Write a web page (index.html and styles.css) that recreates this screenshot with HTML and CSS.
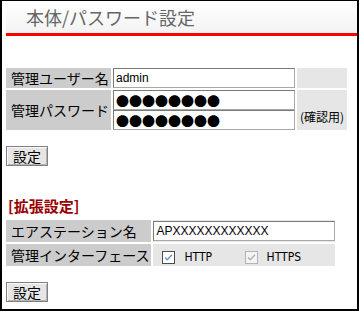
FILE: index.html
```html
<!DOCTYPE html>
<html>
<head>
<meta charset="utf-8">
<title>本体/パスワード設定</title>
<link rel="stylesheet" href="styles.css">
</head>
<body>
<h1 class="titleBar">本体/パスワード設定</h1>

<table class="formTable basicTable">
  <tr>
    <th>管理ユーザー名</th>
    <td class="field"><input type="text" value="admin"></td>
    <td class="note"></td>
  </tr>
  <tr>
    <th>管理パスワード</th>
    <td class="field">
      <input type="text" class="pw" value="●●●●●●●●">
      <input type="text" class="pw" value="●●●●●●●●">
    </td>
    <td class="note">(確認用)</td>
  </tr>
</table>
<button class="btn">設定</button>

<h2 class="sectionTitle">[拡張設定]</h2>

<table class="formTable extTable">
  <tr>
    <th>エアステーション名</th>
    <td class="field"><input type="text" class="apName" value="APXXXXXXXXXXXX"></td>
  </tr>
  <tr>
    <th>管理インターフェース</th>
    <td class="checks">
      <span class="opt">
        <svg width="13" height="13" viewBox="0 0 13 13"><rect x="0.5" y="0.5" width="12" height="12" fill="#fff" stroke="#4d4d4d"/><path d="M3 6.5 L5.3 8.8 L10 3.8" fill="none" stroke="#6f8fc4" stroke-width="1.3"/></svg>
        <span class="optText">HTTP</span>
      </span>
      <span class="opt disabled">
        <svg width="13" height="13" viewBox="0 0 13 13"><rect x="0.5" y="0.5" width="12" height="12" fill="#f4f4f4" stroke="#b4b4b4"/><path d="M3 6.5 L5.3 8.8 L10 3.8" fill="none" stroke="#b0b0b0" stroke-width="1.3"/></svg>
        <span class="optText">HTTPS</span>
      </span>
    </td>
  </tr>
</table>
<button class="btn">設定</button>
</body>
</html>
```

FILE: styles.css
```css
html {
  height: 100%;
}

body {
  margin: 0;
  height: 100%;
  box-sizing: border-box;
  border: solid #000;
  border-width: 1px 2px 2px 2px;
  padding-left: 4px;
  background-color: #fff;
  font-family: "Noto Sans CJK JP", sans-serif;
  font-size: 14px;
  color: #000;
}

.titleBar {
  margin: 0;
  height: 32px;
  line-height: 32px;
  padding-left: 20px;
  font-size: 18px;
  font-weight: normal;
  color: #666;
  background: linear-gradient(#ffffff, #f3f3f3);
  border-bottom: 3px solid #ff0000;
}

.formTable {
  border-collapse: separate;
  border-spacing: 2px;
  margin-left: -2px;
}

.basicTable {
  margin-top: 30px;
}

.formTable th {
  background-color: #cccccc;
  font-weight: normal;
  text-align: left;
  white-space: nowrap;
  padding: 0 2px 0 5px;
  line-height: 20px;
}

.formTable td {
  padding: 0;
}

.field {
  background-color: #e6e6e6;
}

.field input {
  display: block;
  width: 182px;
  height: 20px;
  box-sizing: border-box;
  margin: 0;
  padding: 0 2px;
  border: 1px solid #7a7a7a;
  border-right-color: #a8a8a8;
  border-bottom-color: #a8a8a8;
  background: #fff;
  font-family: "Liberation Sans", sans-serif;
  font-size: 12px;
  color: #000;
}

.field input.pw {
  font-family: "Noto Sans CJK JP", sans-serif;
  font-size: 13px;
  line-height: 18px;
}

.extTable .field {
  padding: 1px 0;
}

.formTable .note {
  background-color: #e6e6e6;
  vertical-align: bottom;
  padding: 0 3px 6px 3px;
  font-size: 12px;
  line-height: 14px;
  white-space: nowrap;
}

.btn {
  display: block;
  margin-top: 14px;
  height: 20px;
  padding: 0 6px;
  border: 1px solid #808080;
  background-color: #e6e6e6;
  box-shadow: inset 1px 1px #fafafa, inset -1px -1px #b4b4b4;
  font-family: "Noto Sans CJK JP", sans-serif;
  font-size: 14px;
  line-height: 17px;
  color: #000;
}

.sectionTitle {
  margin: 31px 0 3px 0;
  padding-left: 2px;
  font-size: 15px;
  line-height: 18px;
  font-weight: bold;
  color: #990000;
}

.formTable .checks {
  background-color: #e6e6e6;
  height: 22px;
  padding-left: 9px;
}

.opt {
  display: inline-flex;
  align-items: center;
  gap: 9px;
  width: 79px;
  vertical-align: middle;
}

.opt svg {
  display: block;
}

.optText {
  font-family: "Liberation Sans Narrow", "DejaVu Sans Condensed", sans-serif;
  font-size: 12px;
  line-height: 14px;
}
```
